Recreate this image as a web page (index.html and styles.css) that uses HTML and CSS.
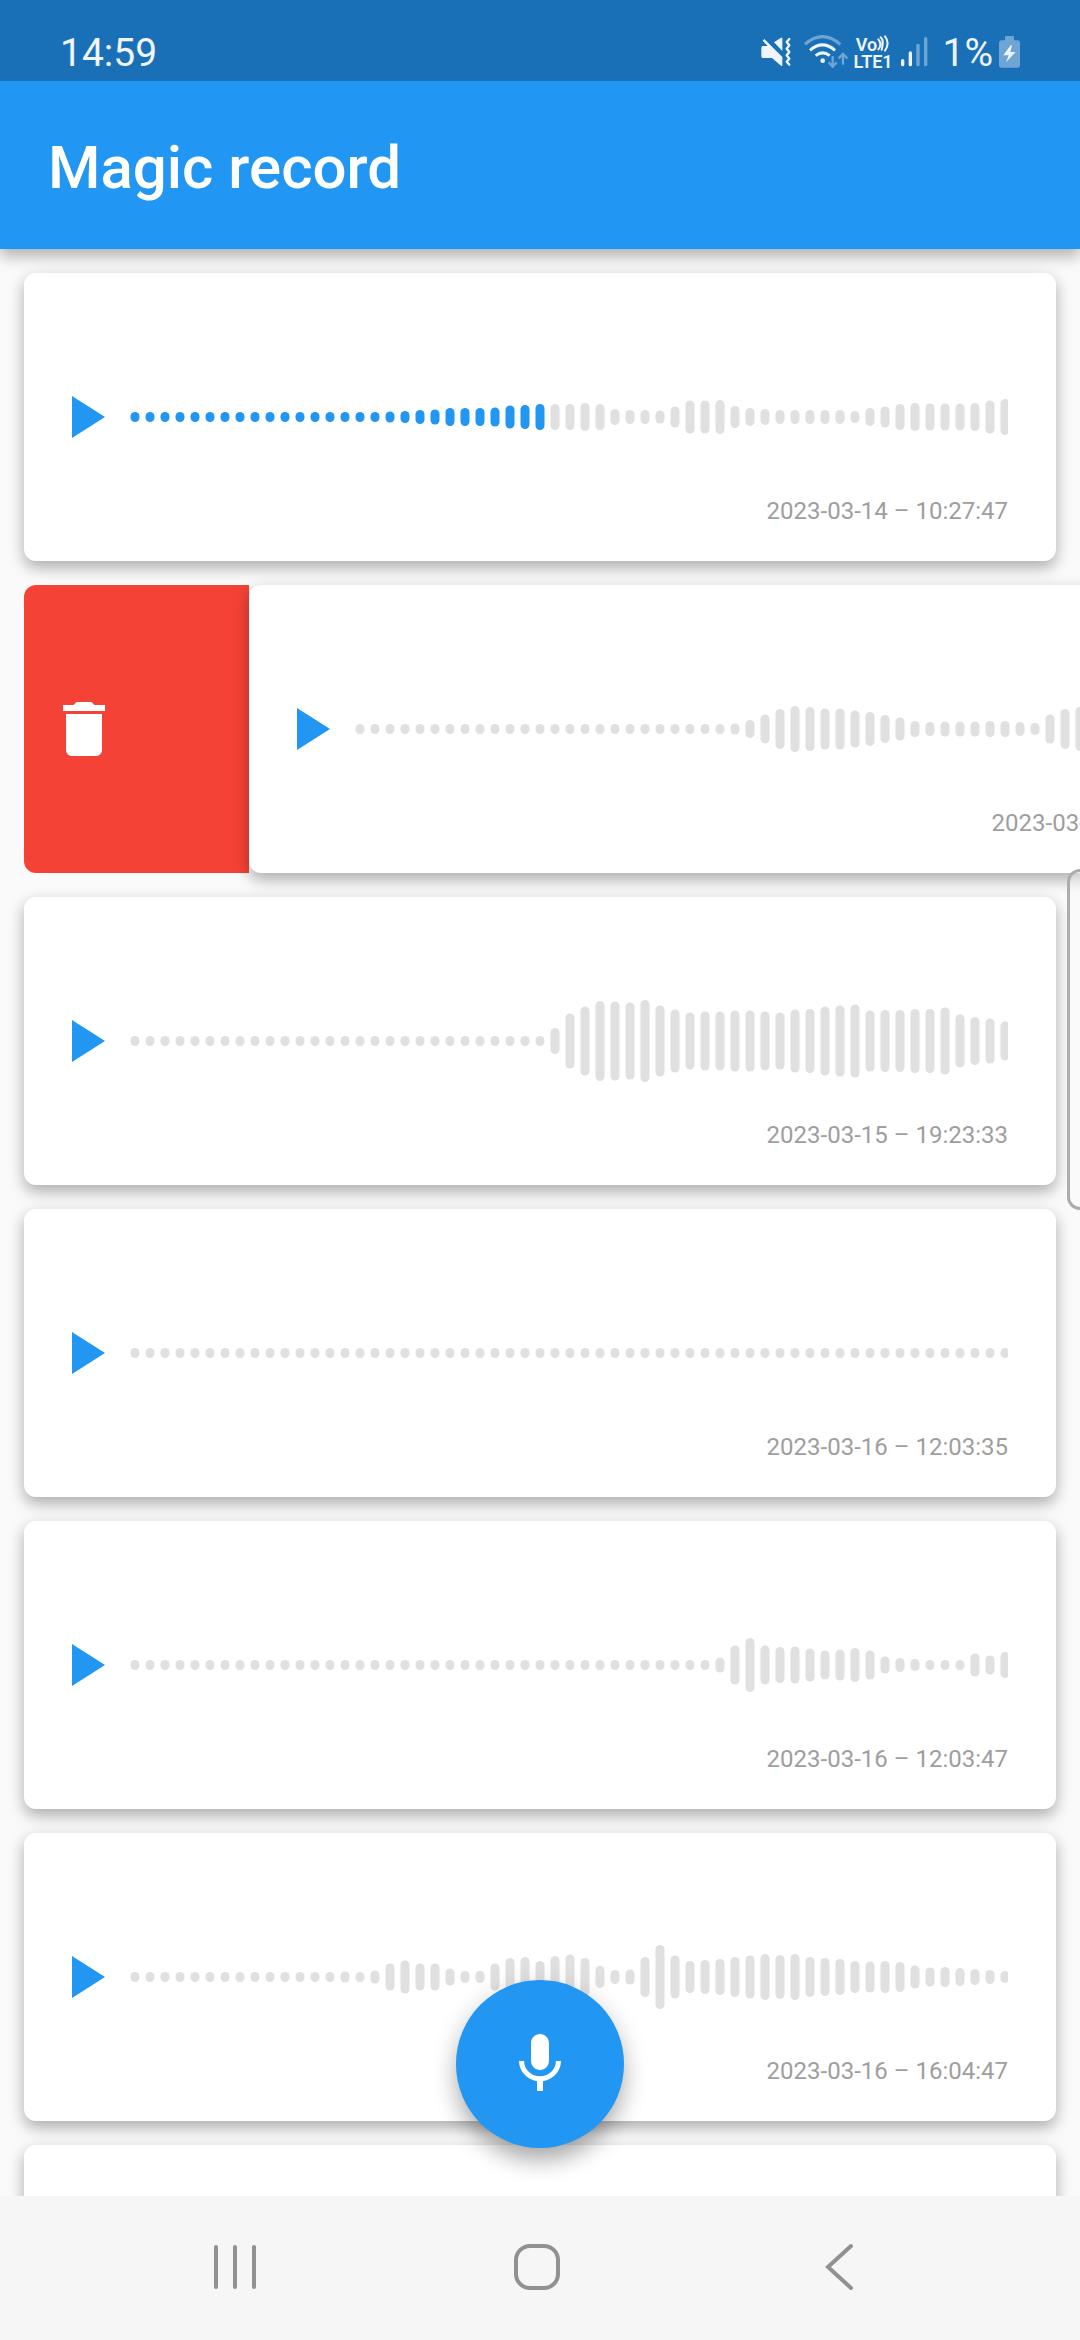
FILE: index.html
```html
<!DOCTYPE html>
<html lang="en">
<head>
<meta charset="utf-8">
<meta name="viewport" content="width=device-width, initial-scale=1">
<title>Magic record</title>
<link rel="stylesheet" href="styles.css">
</head>
<body>
<div class="status">
  <span class="status-text">14:59</span>
  <div class="status-icons">
    <svg class="icon-mute" viewBox="62 108 90 99" aria-hidden="true">
      <path fill="currentColor" d="M63 143q0-5 5-5h14L67 122l5-5 54 54v27h-3L95 174H68q-5 0-5-5zM101 127l21-14h4v40z"/>
      <path fill="none" stroke="currentColor" stroke-width="7" stroke-linejoin="round" stroke-linecap="round" d="M147 117l-8 9 8 10-8 10 8 10-8 10 8 10-8 9 8 9"/>
    </svg>
    <svg class="icon-wifi" viewBox="194 108 132 99" aria-hidden="true">
      <g fill="none" stroke="currentColor" stroke-width="9">
        <path opacity=".4" d="M197 133q52-46 106 0"/>
        <path d="M212 151q37-33 75 0"/>
        <path d="M229 167q21-17 42 0"/>
        <path opacity=".4" stroke-width="7" d="M280 168v31M268 187l12 13 12-13M311 194v-31M298 175l13-13 13 13"/>
      </g>
      <circle cx="250" cy="182" r="7" fill="currentColor"/>
    </svg>
    <div class="volte">
      <span class="volte-top">Vo<svg class="icon-waves" viewBox="409 112 36 48" aria-hidden="true"><path fill="none" stroke="currentColor" stroke-width="6" stroke-linecap="round" d="M413 122q13 15 0 30M420 116q11 9 3 37M433 113q16 20 0 43"/></svg></span>
      <span>LTE1</span>
    </div>
    <svg class="icon-signal" viewBox="484 108 81 99" aria-hidden="true">
      <g stroke="currentColor" stroke-width="10" stroke-linecap="round">
        <path d="M489 182v12M512 159v35"/>
        <path opacity=".4" d="M535 136v58M558 116v78"/>
      </g>
    </svg>
    <span class="status-text">1%</span>
    <svg class="icon-battery" viewBox="777 108 63 99" aria-hidden="true">
      <path fill="currentColor" opacity=".4" d="M795 112q0-4 4-4h19q4 0 4 4v9h10q8 0 8 8v66q0 8-8 8h-47q-8 0-8-8v-66q0-8 8-8h10z"/>
      <path fill="currentColor" d="M812 136l-22 30h16l-8 21 29-31h-16l5-20z"/>
    </svg>
  </div>
</div>
<header class="app-bar"><h1>Magic record</h1></header>

<main class="content">
  <ul class="records">
    <li class="row">
      <article class="card">
        <div class="player">
          <button class="play" type="button" aria-label="Play"><svg viewBox="8 5 11 14"><path d="M8 5v14l11-7z"/></svg></button>
          <svg class="wave" data-played="28" data-levels="10*17 11 12 14 15 18 18 18 19 23 24 26 26 26 28 26 16 14 14 13 21 33 33 34 22 18 16 14*5 12 18 21 26 28 27 27 27 28 33 36"></svg>
        </div>
        <time class="date">2023-03-14 – 10:27:47</time>
      </article>
    </li>
    <li class="row">
      <button class="delete" type="button" aria-label="Delete"><svg viewBox="0 0 24 24"><path d="M6 19c0 1.1.9 2 2 2h8c1.100 0 2-.9 2-2V7H6v12zM19 4h-3.500l-1-1h-5l-1 1H5v2h14V4z"/></svg></button>
      <article class="card">
        <div class="player">
          <button class="play" type="button" aria-label="Play"><svg viewBox="8 5 11 14"><path d="M8 5v14l11-7z"/></svg></button>
          <svg class="wave" data-levels="10*25 11 18 29 40 46 44 41 41 37 34 28 23 16 14 15 15 15 16 16 14 12 29 40 44 40 36 30 24 18 14 12 10*3"></svg>
        </div>
        <time class="date">2023-03-15 – 10:31:02</time>
      </article>
    </li>
    <li class="row">
      <article class="card">
        <div class="player">
          <button class="play" type="button" aria-label="Play"><svg viewBox="8 5 11 14"><path d="M8 5v14l11-7z"/></svg></button>
          <svg class="wave" data-levels="10*28 26 55 69 80 79 77 82 71 63 57 59 59 61 61 59 57 63 64 69 71 73 61 62 62 64 64 67 53 48 45 39"></svg>
        </div>
        <time class="date">2023-03-15 – 19:23:33</time>
      </article>
    </li>
    <li class="row">
      <article class="card">
        <div class="player">
          <button class="play" type="button" aria-label="Play"><svg viewBox="8 5 11 14"><path d="M8 5v14l11-7z"/></svg></button>
          <svg class="wave" data-levels="10*59"></svg>
        </div>
        <time class="date">2023-03-16 – 12:03:35</time>
      </article>
    </li>
    <li class="row">
      <article class="card">
        <div class="player">
          <button class="play" type="button" aria-label="Play"><svg viewBox="8 5 11 14"><path d="M8 5v14l11-7z"/></svg></button>
          <svg class="wave" data-levels="10*39 15 39 54 39 36 37 33 29 31 34 29 17 14 12 10*3 23 19 26"></svg>
        </div>
        <time class="date">2023-03-16 – 12:03:47</time>
      </article>
    </li>
    <li class="row">
      <article class="card">
        <div class="player">
          <button class="play" type="button" aria-label="Play"><svg viewBox="8 5 11 14"><path d="M8 5v14l11-7z"/></svg></button>
          <svg class="wave" data-levels="10*14 11 10 13 27 33 27 27 17 12 12 27 38 40 32 42 45 38 22 14 15 40 64 43 32 34 36 40 43 46 44 46 40 38 36 32 31 32 30 23 19 20 18 16 14 12"></svg>
        </div>
        <time class="date">2023-03-16 – 16:04:47</time>
      </article>
    </li>
    <li class="row"><article class="card"></article></li>
  </ul>
  <button class="record" type="button" aria-label="Record"><svg viewBox="0 0 24 24"><path d="M12 14c1.660 0 2.990-1.340 2.990-3L15 5c0-1.660-1.340-3-3-3S9 3.340 9 5v6c0 1.660 1.340 3 3 3zm5.300-3c0 3-2.540 5.100-5.300 5.100S6.700 14 6.700 11H5c0 3.410 2.720 6.230 6 6.720V21h2v-3.280c3.280-.48 6-3.300 6-6.720h-1.700z"/></svg></button>
</main>

<div class="edge-handle"></div>

<nav class="system-nav">
  <button type="button" aria-label="Recents"><svg viewBox="0 0 48 48"><path d="M5 4v40M24 4v40M43 4v40"/></svg></button>
  <button type="button" aria-label="Home"><svg viewBox="0 0 48 48"><rect x="3" y="3" width="42" height="42" rx="14"/></svg></button>
  <button type="button" aria-label="Back"><svg viewBox="0 0 48 48"><path d="M36 3L13 24l23 21"/></svg></button>
</nav>
<script src="script.js"></script>
</body>
</html>
```
FILE: styles.css
```css
* {
  box-sizing: border-box;
}

body {
  margin: 0;
  height: 100vh;
  display: flex;
  flex-direction: column;
  overflow: hidden;
  position: relative;
  background: #fafafa;
  font-family: Roboto, sans-serif;
}

button {
  padding: 0;
  border: 0;
  background: none;
  font: inherit;
}

svg {
  display: block;
}

.status {
  flex: none;
  display: flex;
  align-items: center;
  justify-content: space-between;
  height: 81px;
  padding: 24px 60px 0;
  background: #1a70b7;
  color: #eff4ff;
  z-index: 2;
}

.status-text {
  font-size: 39px;
  line-height: 46px;
}

.status-icons {
  display: flex;
  align-items: center;
}

.status-icons svg {
  height: 33px;
  overflow: visible;
}

.icon-mute {
  width: 30px;
  margin-right: 13px;
}

.icon-wifi {
  width: 44px;
  margin-right: 6px;
}

.volte {
  width: 38px;
  margin-right: 9px;
  font-size: 18px;
  font-weight: 600;
  line-height: 17px;
}

.volte span {
  display: block;
}

.volte .volte-top {
  display: flex;
  justify-content: center;
}

.volte .icon-waves {
  width: 12px;
  height: 16px;
}

.icon-signal {
  width: 27px;
  margin-right: 15px;
}

.icon-battery {
  width: 21px;
  margin-left: 6px;
}

.app-bar {
  flex: none;
  display: flex;
  align-items: center;
  height: 168px;
  padding: 6px 48px 0;
  background: #2196f3;
  color: #fff;
  box-shadow: 0 7px 15px rgba(0, 0, 0, .27), 0 3px 18px rgba(0, 0, 0, .06);
  z-index: 1;
}

h1 {
  margin: 0;
  font-size: 60px;
  line-height: 70px;
  font-weight: 500;
}

.content {
  flex: 1;
  min-height: 0;
  position: relative;
  overflow: hidden;
}

.records {
  display: flex;
  flex-direction: column;
  gap: 24px;
  margin: 0;
  padding: 24px;
  list-style: none;
}

.row {
  display: flex;
}

.card {
  flex: 0 0 100%;
  min-height: 288px;
  padding: 96px 48px 36px;
  border-radius: 12px;
  background: #fff;
  box-shadow: 0 7px 15px rgba(0, 0, 0, .27), 0 3px 18px rgba(0, 0, 0, .06);
}

.player {
  display: flex;
  align-items: center;
  gap: 24px;
  height: 96px;
}

.play {
  flex: none;
  width: 33px;
  height: 42px;
}

.play svg {
  width: 100%;
  height: 100%;
  fill: #2196f3;
}

.wave {
  flex: 1;
  min-width: 0;
  height: 96px;
  overflow: hidden;
  fill: none;
  stroke: #e0e0e0;
  stroke-width: 9px;
  stroke-linecap: round;
}

.wave .played {
  stroke: #2196f3;
}

.date {
  display: block;
  margin-top: 32px;
  font-size: 24px;
  line-height: 28px;
  text-align: right;
  color: #9e9e9e;
}

.delete {
  flex: 0 0 225px;
  display: flex;
  align-items: center;
  padding-left: 24px;
  border-radius: 12px 0 0 12px;
  background: #f44336;
}

.delete svg,
.record svg {
  width: 72px;
  height: 72px;
  fill: #fff;
}

.record {
  position: absolute;
  left: 50%;
  bottom: 48px;
  width: 168px;
  height: 168px;
  margin-left: -84px;
  padding: 48px;
  border-radius: 50%;
  background: #2196f3;
  box-shadow: 0 15px 24px -4px rgba(0, 0, 0, .28), 0 6px 28px rgba(0, 0, 0, .14);
}

.edge-handle {
  position: absolute;
  top: 869px;
  right: 0;
  width: 13px;
  height: 341px;
  border: 3px solid #adadad;
  border-right: 0;
  border-radius: 14px 0 0 14px;
  background: rgba(250, 250, 250, .4);
  z-index: 2;
}

.system-nav {
  flex: none;
  display: flex;
  height: 144px;
  padding: 0 90px 2px 84px;
  background: #f6f6f6;
}

.system-nav button {
  flex: 1;
  display: flex;
  align-items: center;
  justify-content: center;
}

.system-nav svg {
  width: 48px;
  height: 48px;
  fill: none;
  stroke: #919191;
  stroke-width: 4px;
  stroke-linecap: round;
}
```
FILE: script.js
```js
// Draws one rounded bar per level; "10*5" stands for five bars of height 10.
const BAR = 9;
const PITCH = 15;

document.querySelectorAll('.wave').forEach((wave) => {
  const played = Number(wave.dataset.played || 0);
  const levels = wave.dataset.levels.split(' ').flatMap((part) => {
    const [level, count] = part.split('*').map(Number);
    return Array(count || 1).fill(level);
  });
  levels.forEach((level, i) => {
    const bar = document.createElementNS('http://www.w3.org/2000/svg', 'path');
    const stem = level - BAR;
    bar.setAttribute('d', `M${6 + i * PITCH} ${48 - stem / 2}v${stem}`);
    if (i < played) bar.setAttribute('class', 'played');
    wave.append(bar);
  });
});
```
